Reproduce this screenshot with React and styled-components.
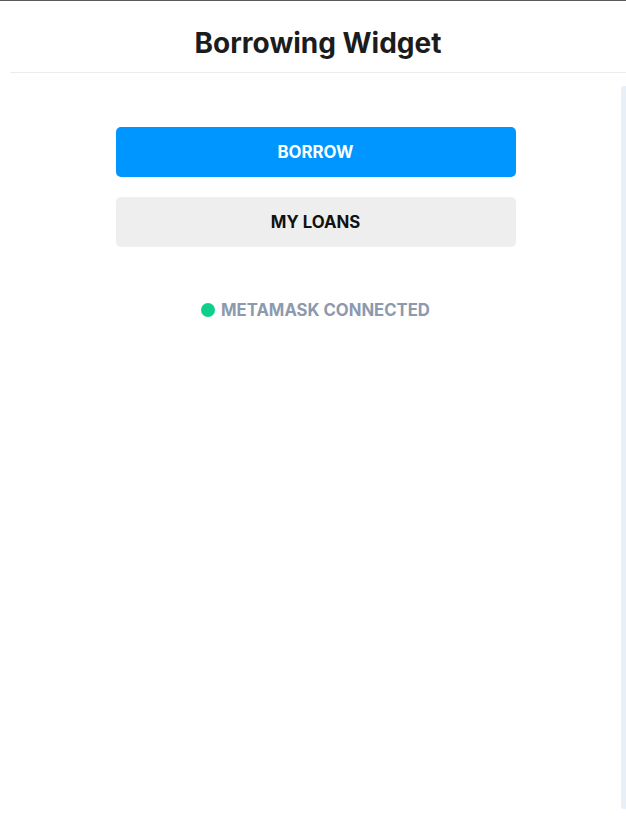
import React from 'react';
import { createGlobalStyle, styled } from 'styled-components';

const GlobalStyle = createGlobalStyle`
  html, body {
    margin: 0;
    padding: 0;
    background: #ffffff;
  }
  body {
    border-top: 1px solid #5a5a5a;
    font-family: Inter, "Noto Sans", sans-serif;
  }
`;

function App() {
  return (
    <>
      <GlobalStyle />
      <Page>
        <Header>
          <Title>Borrowing Widget</Title>
        </Header>
        <Body>
          <Content>
            <Button $primary>BORROW</Button>
            <Button>MY LOANS</Button>
            <Status>
              <Dot />
              METAMASK CONNECTED
            </Status>
          </Content>
          <Track />
        </Body>
      </Page>
    </>
  );
}

export default App;

const Page = styled.div`
  display: flex;
  flex-direction: column;
  height: 817px;
  padding-left: 10px;
`;

const Header = styled.header`
  height: 72px;
  box-sizing: border-box;
  padding-top: 12px;
  display: flex;
  align-items: center;
  justify-content: center;
  border-bottom: 1px solid #ececec;
`;

const Title = styled.h1`
  margin: 0;
  font-size: 28px;
  font-weight: 700;
  color: #1c1c1c;
`;

const Body = styled.div`
  flex: 1;
  display: flex;
  padding-top: 13px;
  padding-bottom: 9px;
`;

const Content = styled.main`
  flex: 1;
  display: flex;
  flex-direction: column;
  align-items: center;
  gap: 20px;
  padding-top: 41px;
`;

const Button = styled.button`
  width: 400px;
  height: 50px;
  border: none;
  border-radius: 5px;
  background: ${(p) => (p.$primary ? '#0096ff' : '#eeeeee')};
  color: ${(p) => (p.$primary ? '#ffffff' : '#111111')};
  font-family: Inter, "Noto Sans", sans-serif;
  font-size: 16.8px;
  font-weight: 700;
  cursor: pointer;
`;

const Status = styled.div`
  display: flex;
  align-items: center;
  gap: 6px;
  margin-top: 33px;
  font-size: 16.7px;
  font-weight: 700;
  color: #8c99ae;
`;

const Dot = styled.span`
  width: 14px;
  height: 14px;
  border-radius: 50%;
  background: #0fd08a;
`;

const Track = styled.div`
  width: 5px;
  background: #e9eff6;
  border-radius: 3px 0 0 3px;
`;
